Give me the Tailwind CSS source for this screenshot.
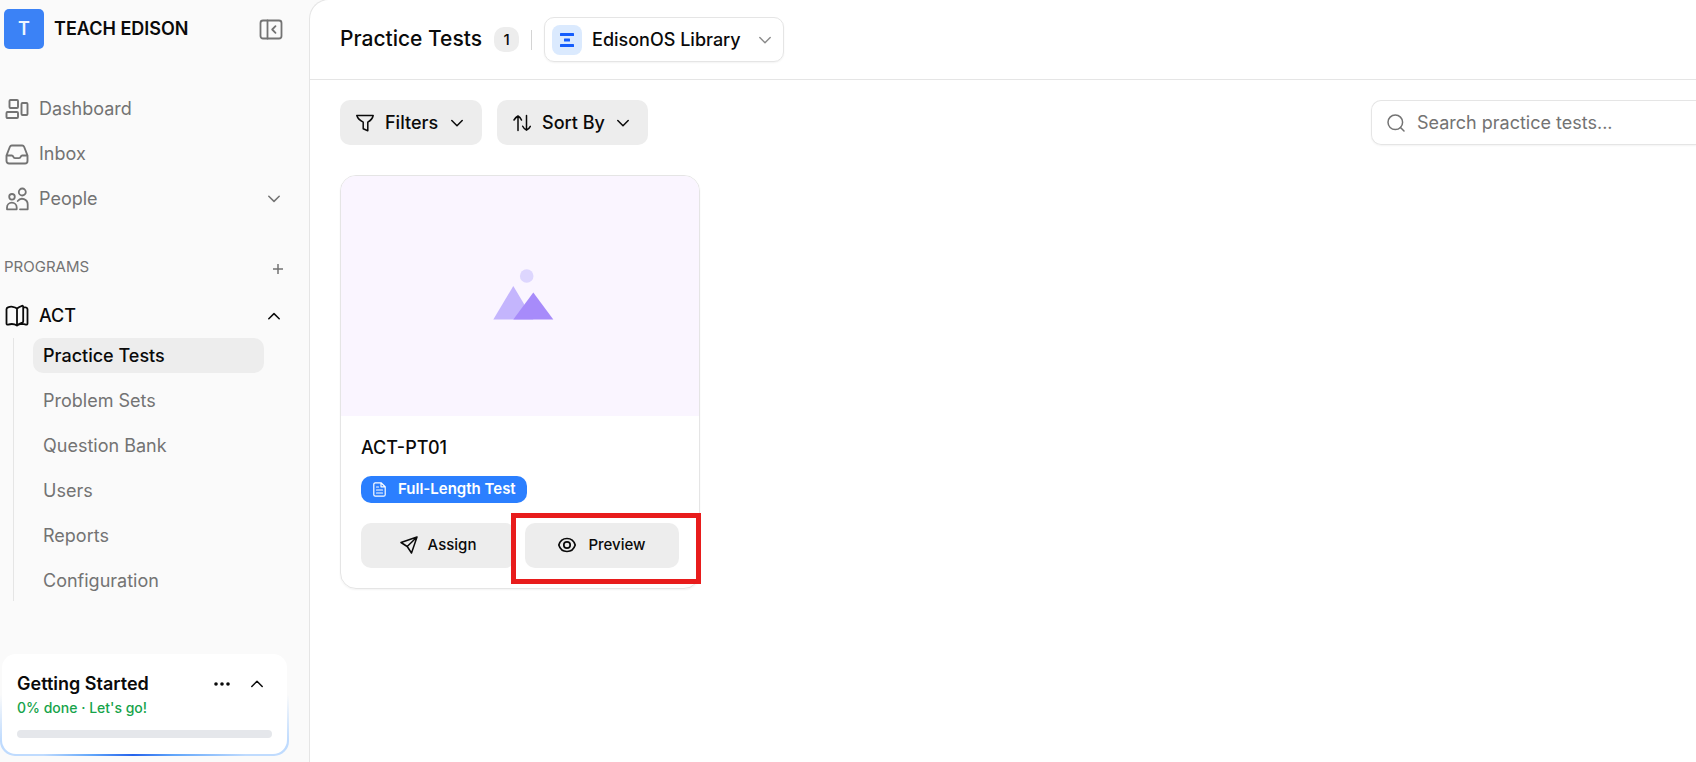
<!DOCTYPE html>
<html lang="en">
<head>
<meta charset="utf-8">
<title>Practice Tests</title>
<script src="https://cdn.jsdelivr.net/npm/@tailwindcss/browser@4"></script>
</head>
<body class="flex h-screen overflow-hidden bg-[#fafafa] font-['Inter',sans-serif] text-lg text-[#0a0a0a]">

<aside class="flex w-[309px] shrink-0 flex-col">
  <div class="flex items-center pt-[9px] pl-1 pr-[26px]">
    <span class="flex size-10 items-center justify-center rounded-[5px] bg-[#3b82f6] font-semibold text-blue-50">T</span>
    <span class="ml-[10px] font-semibold">TEACH EDISON</span>
    <button class="ml-auto text-[#737373]" aria-label="Collapse sidebar">
      <svg class="block h-6 w-6" viewBox="0 0 24 24" fill="none" stroke="currentColor" stroke-width="1.8" stroke-linecap="round" stroke-linejoin="round"><rect x="1.5" y="3.5" width="21" height="18" rx="2.5"/><path d="M8.5 3.5v18M16.5 9.2 13.2 12.5l3.3 3.3"/></svg>
    </button>
  </div>

  <nav class="mt-[37px] flex flex-col text-[#737373]">
    <a href="#" class="flex h-[45px] items-center gap-[10px] pl-[5px]">
      <svg class="h-6 w-6" viewBox="0 0 24 24" fill="none" stroke="currentColor" stroke-width="1.9" stroke-linejoin="round"><rect x="4.5" y="3" width="8.5" height="8" rx="1"/><rect x="1.5" y="15" width="11.500" height="6" rx="1"/><rect x="16.500" y="6" width="6" height="12" rx="1"/></svg>
      Dashboard
    </a>
    <a href="#" class="flex h-[45px] items-center gap-[10px] pl-[5px]">
      <svg class="h-6 w-6" viewBox="0 0 24 24" fill="none" stroke="currentColor" stroke-width="1.9" stroke-linejoin="round" stroke-linecap="round"><path d="M1.500 13.500 4.800 5c.4-1 1-1.500 2-1.500h10.400c1 0 1.600.5 2 1.500l3.300 8.500v5.500a2.500 2.500 0 0 1-2.500 2.500H4a2.500 2.500 0 0 1-2.500-2.500zM1.500 13.500h5.300c1 0 1.200.6 1.500 1.300.3.900.8 1.300 1.700 1.300h4c.9 0 1.400-.4 1.700-1.300.3-.7.500-1.300 1.500-1.300h5.300"/></svg>
      Inbox
    </a>
    <a href="#" class="flex h-[45px] items-center gap-[10px] pl-[5px] pr-[29px]">
      <svg class="h-6 w-6" viewBox="0 0 24 24" fill="none" stroke="currentColor" stroke-width="1.800" stroke-linejoin="round" stroke-linecap="round"><circle cx="17.300" cy="5" r="3.500"/><circle cx="7" cy="9.800" r="2.800"/><path d="M2 22.300h9.700v-1.800a4.800 4.800 0 0 0-9.700 0zM15 22.300h7.700V17.500a5.600 5.600 0 0 0-10-3.500"/></svg>
      People
      <svg class="ml-auto h-3 w-3" viewBox="0 0 12 12" fill="none" stroke="currentColor" stroke-width="1.500" stroke-linecap="round" stroke-linejoin="round"><path d="m.8 3.200 5.200 5.200 5.200-5.200"/></svg>
    </a>
  </nav>

  <div class="mt-8 flex h-[27px] items-center justify-between pl-1 pr-[26px] text-[#737373]">
    <h2 class="text-[15px]">PROGRAMS</h2>
    <button aria-label="Add program">
      <svg class="mt-1 block h-[10px] w-[10px]" viewBox="0 0 10 10" stroke="currentColor" stroke-width="1.500"><path d="M5 0v10M0 5h10"/></svg>
    </button>
  </div>

  <a href="#" class="mt-[13px] flex h-[45px] items-center gap-[10px] pl-[5px] pr-[29px] font-medium">
    <svg class="h-6 w-6" viewBox="0 0 24 24" fill="none" stroke="currentColor" stroke-width="1.800" stroke-linejoin="round" stroke-linecap="round"><path d="M12 21.500V4.500C9.800 2.500 5.500 2.300 3 3.300c-1 .4-1.500 1-1.500 2V19.500c0 1 .7 1.400 1.600 1.100 3-.9 6.400-.7 8.900.9zM12 21.500c1.300-.8 3-1.400 4.500-1.600M12 4.500c1.400-1.200 3.200-2.200 5-2.700.7-.2 1.200.2 1.200.9v14.500c0 .8-.3 1.200-1 1.500-2 .7-3.900 1.500-5.200 2.800M18.200 3.200c2 0 4.300.5 4.300 2.100v14.200c0 1-.7 1.400-1.600 1.100-1.300-.4-2.800-.6-4.400-.7"/></svg>
    ACT
    <svg class="ml-auto h-3 w-3" viewBox="0 0 12 12" fill="none" stroke="currentColor" stroke-width="1.500" stroke-linecap="round" stroke-linejoin="round"><path d="m.8 8.800 5.200-5.200 5.200 5.200"/></svg>
  </a>
  <ul class="ml-[13px] flex flex-col gap-[10px] border-l border-[#e5e5e5] pb-[3px] pl-[19px] text-[#737373]">
    <li><a href="#" class="flex h-[35px] w-[231px] items-center rounded-[10px] bg-[#ededed] pl-[10px] font-medium text-[#0a0a0a]">Practice Tests</a></li>
    <li><a href="#" class="flex h-[35px] items-center pl-[10px]">Problem Sets</a></li>
    <li><a href="#" class="flex h-[35px] items-center pl-[10px]">Question Bank</a></li>
    <li><a href="#" class="flex h-[35px] items-center pl-[10px]">Users</a></li>
    <li><a href="#" class="flex h-[35px] items-center pl-[10px]">Reports</a></li>
    <li><a href="#" class="flex h-[35px] items-center pl-[10px]">Configuration</a></li>
  </ul>

  <section class="mt-auto mb-[6px] mr-5 rounded-[15px] bg-[linear-gradient(to_bottom,#fafafa_40%,transparent_85%),linear-gradient(to_right,#bfdbfe,#bfdbfe_15%,#60a5fa_32%,#2563eb_46%,#60a5fa_60%,#bfdbfe_85%)] px-[2px] pb-[2px]">
    <div class="rounded-[14px] bg-white px-[15px] pt-[18px] pb-4">
      <div class="flex h-6 items-center">
        <h2 class="font-semibold">Getting Started</h2>
        <button class="ml-auto" aria-label="More options"><svg class="block h-4 w-4" viewBox="0 0 16 16" fill="currentColor"><circle cx="2" cy="8" r="1.800"/><circle cx="8" cy="8" r="1.800"/><circle cx="14" cy="8" r="1.800"/></svg></button>
        <button class="ml-[21px] mr-[9px]" aria-label="Collapse"><svg class="block h-3 w-3" viewBox="0 0 12 12" fill="none" stroke="currentColor" stroke-width="1.500" stroke-linecap="round" stroke-linejoin="round"><path d="m.8 8.500 5.200-5.200 5.200 5.200"/></svg></button>
      </div>
      <p class="mt-[2px] text-sm leading-5 font-medium text-[#16a34a]">0% done · Let's go!</p>
      <div class="mt-3 h-2 rounded-full bg-[#e5e7eb]"></div>
    </div>
  </section>
</aside>

<main class="-mt-px flex min-w-0 flex-1 flex-col rounded-tl-[20px] border-l border-t border-[#e5e5e5] bg-white">
  <header class="flex h-20 shrink-0 items-center border-b border-[#e5e5e5] pl-[30px]">
    <h1 class="text-[21px] font-medium">Practice Tests</h1>
    <span class="ml-3 flex h-[25px] w-[25px] items-center justify-center rounded-[10px] bg-[#ededed] text-[15px] font-medium">1</span>
    <span class="ml-3 h-5 w-px bg-[#d4d4d4]"></span>
    <label class="ml-3 flex h-[45px] w-60 items-center rounded-[10px] border border-[#e5e5e5] pl-[7px] pr-3 shadow-xs">
      <span class="flex size-[30px] shrink-0 items-center justify-center rounded-[8px] bg-[#dbeafe]">
        <svg class="h-[14px] w-[14px]" viewBox="0 0 14 14" fill="#155dfc"><rect width="14" height="3" rx=".5"/><rect x="4" y="5.500" width="6" height="3" rx=".5"/><rect y="11" width="14" height="3" rx=".5"/></svg>
      </span>
      <select aria-label="Library" class="ml-[10px] min-w-0 flex-1 appearance-none bg-transparent font-medium outline-none"><option>EdisonOS Library</option></select>
      <svg class="h-3 w-3 shrink-0 text-[#8a8a8a]" viewBox="0 0 12 12" fill="none" stroke="currentColor" stroke-width="1.400" stroke-linecap="round" stroke-linejoin="round"><path d="m.8 3.500 5.200 5.200 5.200-5.200"/></svg>
    </label>
  </header>

  <div class="flex items-center gap-[15px] pt-5 pl-[30px]">
    <button class="flex h-[45px] w-[142px] items-center rounded-[10px] bg-[#ededed] pl-4 pr-[19px] font-medium">
      <svg class="mr-[11px] h-[18px] w-[18px]" viewBox="0 0 18 18" fill="none" stroke="currentColor" stroke-width="1.500" stroke-linejoin="round"><path d="M.8 1.500h16.400c-.5 2.500-2.600 5-5.400 6.700v8.600l-4.600-2V8.200C4 6.500 1.500 4 .8 1.500z"/></svg>
      Filters
      <svg class="ml-auto h-3 w-3" viewBox="0 0 12 12" fill="none" stroke="currentColor" stroke-width="1.500" stroke-linecap="round" stroke-linejoin="round"><path d="m.8 3.500 5.200 5.200 5.200-5.200"/></svg>
    </button>
    <button class="flex h-[45px] w-[151px] items-center rounded-[10px] bg-[#ededed] pl-4 pr-[19px] font-medium">
      <svg class="mr-[11px] h-[18px] w-[18px]" viewBox="0 0 18 18" fill="none" stroke="currentColor" stroke-width="1.500" stroke-linecap="round" stroke-linejoin="round"><path d="M5 16.500v-14M1 6c1-1.700 2.300-3 4-4 1.700 1 3 2.300 3.500 4M13.500 1.500v14M9.700 12.300c.7 1.500 2 2.800 3.800 3.900 1.700-1 3-2.300 3.800-3.900"/></svg>
      Sort By
      <svg class="ml-auto h-3 w-3" viewBox="0 0 12 12" fill="none" stroke="currentColor" stroke-width="1.500" stroke-linecap="round" stroke-linejoin="round"><path d="m.8 3.500 5.200 5.200 5.200-5.200"/></svg>
    </button>
    <label class="ml-auto flex h-[45px] w-[325px] items-center rounded-l-[10px] border border-r-0 border-[#e5e5e5] pl-[15px] shadow-xs">
      <svg class="h-[18px] w-[18px] shrink-0 text-[#737373]" viewBox="0 0 18 18" fill="none" stroke="currentColor" stroke-width="1.500" stroke-linecap="round"><circle cx="8.300" cy="8.300" r="7.300"/><path d="m13.500 13.500 3.500 3.500"/></svg>
      <input type="text" aria-label="Search practice tests" placeholder="Search practice tests..." class="ml-3 min-w-0 flex-1 bg-transparent placeholder:text-[#737373] outline-none">
    </label>
  </div>

  <article class="relative mt-[30px] ml-[30px] w-[360px] rounded-2xl border border-[#e5e5e5] shadow-xs">
    <div class="flex h-60 items-center justify-center rounded-t-[15px] bg-[#faf5ff]">
      <svg class="h-20 w-20" viewBox="0 0 80 80"><circle cx="46.700" cy="20" r="6.800" fill="#ddd6fe"/><path d="M13.300 63.500 33.300 30l20 33.500z" fill="#c4b5fd"/><path d="M33.300 63.500 53.300 36.500l20 27z" fill="#a78bfa"/></svg>
    </div>
    <div class="px-5 pt-[18px] pb-5">
      <h3 class="leading-7 font-medium">ACT-PT01</h3>
      <span class="mt-[14px] flex h-[27px] w-fit items-center gap-3 rounded-[10px] bg-[#2b7fff] pl-3 pr-[11px] pb-px text-[15px] font-semibold text-white">
        <svg class="h-[15px] w-[13px]" viewBox="0 0 13 15" fill="none" stroke="currentColor" stroke-width="1.200" stroke-linejoin="round" stroke-linecap="round"><path d="M2.300.8H8l4.200 4v7.900a1.500 1.500 0 0 1-1.500 1.500H2.300a1.500 1.500 0 0 1-1.500-1.500V2.300A1.500 1.500 0 0 1 2.300.8zM8 .8v4h4.200M3.500 5h2M3.500 8h6M3.500 11h6"/></svg>
        Full-Length Test
      </span>
      <div class="mt-5 grid grid-cols-2 gap-[10px] text-[15px] font-medium">
        <button class="flex h-[45px] items-center justify-center gap-[10px] rounded-[10px] bg-[#ededed] pb-[2px]">
          <svg class="h-[18px] w-[18px]" viewBox="0 0 18 18" fill="none" stroke="currentColor" stroke-width="1.500" stroke-linejoin="round" stroke-linecap="round"><path d="M17 1 1 6.500l6.200 4L11.500 17zM17 1 7.200 10.500"/></svg>
          Assign
        </button>
        <button class="flex h-[45px] items-center justify-center gap-3 rounded-[10px] bg-[#ededed] pb-[2px]">
          <svg class="h-[18px] w-[18px]" viewBox="0 0 18 18" fill="none" stroke="currentColor" stroke-width="1.700"><path d="M.8 9C2 5 5 2.500 9 2.500S16 5 17.200 9C16 13 13 15.500 9 15.500S2 13 .8 9z"/><circle cx="9" cy="9" r="3.200"/></svg>
          Preview
        </button>
      </div>
    </div>
    <div class="pointer-events-none absolute -right-[2px] bottom-1 h-[71px] w-[190px] border-5 border-[#e81c1c]"></div>
  </article>
</main>
</body>
</html>
